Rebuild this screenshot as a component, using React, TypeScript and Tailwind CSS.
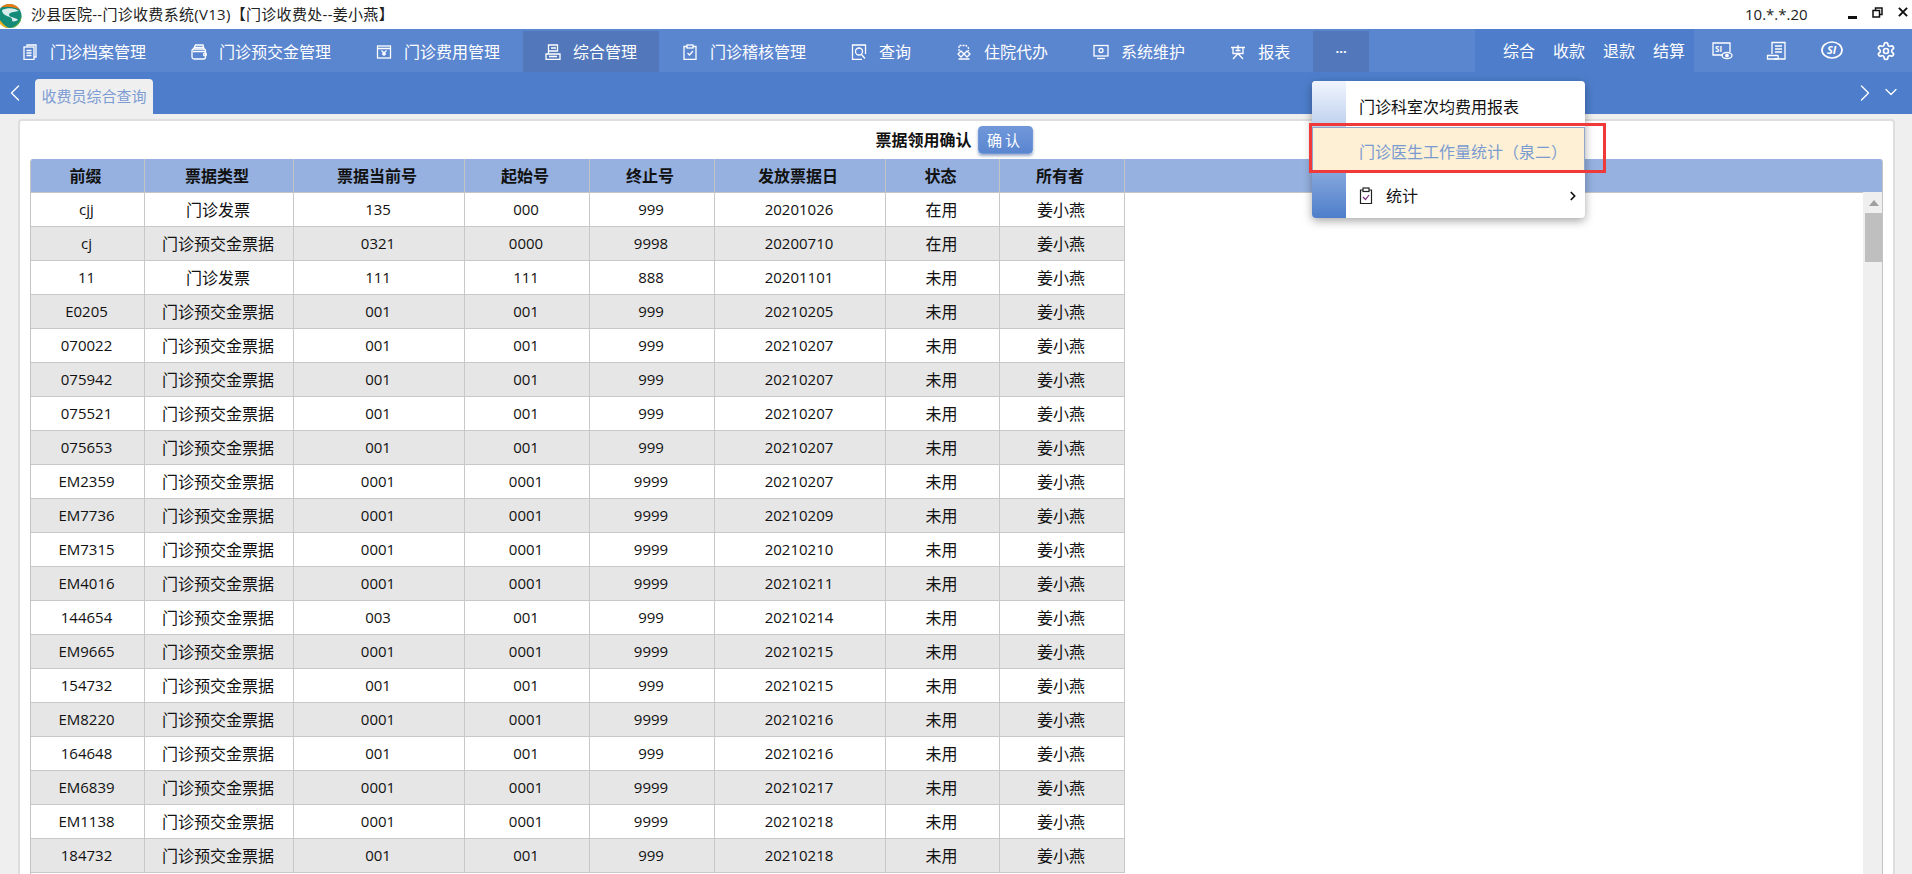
import React from 'react';
import { ChevronLeft, ChevronRight, ChevronDown } from 'lucide-react';

const COLS = 'grid grid-cols-[114px_149px_171px_125px_125px_171px_114px_125px]';
const HEADERS = ['前缀', '票据类型', '票据当前号', '起始号', '终止号', '发放票据日', '状态', '所有者'];

const MZ = '门诊发票';
const YJ = '门诊预交金票据';
const OWNER = '姜小燕';

const ROWS: string[][] = [
	['cjj', MZ, '135', '000', '999', '20201026', '在用'],
	['cj', YJ, '0321', '0000', '9998', '20200710', '在用'],
	['11', MZ, '111', '111', '888', '20201101', '未用'],
	['E0205', YJ, '001', '001', '999', '20210205', '未用'],
	['070022', YJ, '001', '001', '999', '20210207', '未用'],
	['075942', YJ, '001', '001', '999', '20210207', '未用'],
	['075521', YJ, '001', '001', '999', '20210207', '未用'],
	['075653', YJ, '001', '001', '999', '20210207', '未用'],
	['EM2359', YJ, '0001', '0001', '9999', '20210207', '未用'],
	['EM7736', YJ, '0001', '0001', '9999', '20210209', '未用'],
	['EM7315', YJ, '0001', '0001', '9999', '20210210', '未用'],
	['EM4016', YJ, '0001', '0001', '9999', '20210211', '未用'],
	['144654', YJ, '003', '001', '999', '20210214', '未用'],
	['EM9665', YJ, '0001', '0001', '9999', '20210215', '未用'],
	['154732', YJ, '001', '001', '999', '20210215', '未用'],
	['EM8220', YJ, '0001', '0001', '9999', '20210216', '未用'],
	['164648', YJ, '001', '001', '999', '20210216', '未用'],
	['EM6839', YJ, '0001', '0001', '9999', '20210217', '未用'],
	['EM1138', YJ, '0001', '0001', '9999', '20210218', '未用'],
	['184732', YJ, '001', '001', '999', '20210218', '未用'],
];

const Ico = ({ children, size = 16 }: { children: React.ReactNode; size?: number }) => (
	<svg width={size} height={size} viewBox="0 0 16 16" fill="none" stroke="currentColor" strokeWidth="1.3" className="shrink-0">
		{children}
	</svg>
);

const NAV: { label: string; icon: React.ReactNode; active?: boolean }[] = [
	{
		label: '门诊档案管理',
		icon: (
			<Ico>
				<path d="M5 2.5V1h9v12h-2" />
				<rect x="2" y="3" width="10" height="12.500" />
				<path d="M4.500 6.500h5M4.500 9h5M4.500 11.500h5" />
			</Ico>
		),
	},
	{
		label: '门诊预交金管理',
		icon: (
			<Ico>
				<rect x="1" y="5" width="13.500" height="10" rx="2" />
				<path d="M2.500 5l2-4h7.500l1 4" />
				<path d="M3.500 3.500h9M2 7.500h12" />
				<circle cx="14" cy="10.500" r="1.400" />
			</Ico>
		),
	},
	{
		label: '门诊费用管理',
		icon: (
			<Ico>
				<rect x="1.500" y="2" width="13" height="12" />
				<path d="M1.500 4.500h13M5.500 6.500l2.500 2.500 2.500-2.500M8 9v3M6 10h4" />
			</Ico>
		),
	},
	{
		label: '综合管理',
		active: true,
		icon: (
			<Ico>
				<path d="M3.500 1h9v6h-9zM3.500 7v3M1 10h14v5.500H1zM6 4h5M4 12.500h8" />
			</Ico>
		),
	},
	{
		label: '门诊稽核管理',
		icon: (
			<Ico>
				<path d="M5 2.500H2v13h12v-13h-3" />
				<rect x="5" y="1" width="6" height="3" />
				<path d="M5.500 9l2 2 3.500-4" />
			</Ico>
		),
	},
	{
		label: '查询',
		icon: (
			<Ico>
				<path d="M14.500 10V1H1.500v14.500H11" />
				<circle cx="8" cy="7.500" r="3.500" />
				<path d="M10.500 10.500l3.500 4" />
			</Ico>
		),
	},
	{
		label: '住院代办',
		icon: (
			<Ico>
				<path d="M3 7V1.500h7L12.500 4v3" strokeDasharray="2 1" />
				<path d="M2 10l3-3 3 3-3 3zM8 10l3-3 3 3-3 3zM2.500 15h11" />
			</Ico>
		),
	},
	{
		label: '系统维护',
		icon: (
			<Ico>
				<rect x="1" y="1.500" width="14" height="10.500" />
				<circle cx="8" cy="6.500" r="2" />
				<path d="M4 14.500h8" />
			</Ico>
		),
	},
	{
		label: '报表',
		icon: (
			<Ico>
				<path d="M1 3.500h14M3 3.500v6h10v-6M8 1v6.500M3 15l5-5.500 5 5.500M5.500 6.500h5" />
			</Ico>
		),
	},
];

const Logo = () => (
	<svg width="24" height="26" viewBox="0 0 24 26" className="shrink-0">
		<circle cx="9.500" cy="14" r="12" fill="#148a78" />
		<path d="M1 5.500A12 12 0 0 1 20 8c-5-3-13-4-19-2.500z" fill="#ee7a14" />
		<path d="M-2 15c0 5 3 9 7 10.500l4 .500C4 24 0 19-2 15z" fill="#f2b31e" />
		<path d="M21.500 13a12 12 0 0 1-12 13c6-1 11-6 12-13z" fill="#5cae3a" />
		<path d="M2 8c6-3 13-2 17 1-5 1-10 1-10 4 1 3 7 2 9 5-2 1-4 2-6 1 1-3-2-4-5-5-3-1-5-3-5-6z" fill="#d9ecec" />
	</svg>
);

const MenuCheckIcon = () => (
	<svg width="14" height="18" viewBox="0 0 14 18" fill="none" stroke="#222" strokeWidth="1.200">
		<path d="M4 3H1.500v13.500h11V3H10" />
		<rect x="4" y="1" width="6" height="3.500" fill="#fff" />
		<path d="M4 10l2.500 2.500 3.500-4.500" stroke="#7a2a7a" />
	</svg>
);

export default function App() {
	return (
		<div className="relative flex h-screen w-screen flex-col overflow-hidden bg-[#efefef] font-['Open_Sans','Noto_Sans_CJK_SC',sans-serif] text-[16px] text-[#111]">
			{/* title bar */}
			<div className="flex h-[29px] shrink-0 items-center bg-white">
				<Logo />
				<span className="ml-[7px] text-[15px] leading-none tracking-[0.3px] text-[#222]">沙县医院--门诊收费系统(V13)【门诊收费处--姜小燕】</span>
				<span className="ml-auto w-[60px] text-[15px] leading-none text-[#222]">10.*.*.20</span>
				<div className="ml-[43px] mr-[4px] flex items-center gap-[15px]">
					<span className="mt-[5px] h-[3px] w-[9px] bg-[#111]" />
					<svg width="11" height="11" viewBox="0 0 11 11" fill="none" stroke="#111" strokeWidth="1.500" className="mb-[5px]">
						<rect x="1" y="3.500" width="6.500" height="6.500" />
						<path d="M3.500 3V1h6.500v6.500H8" />
					</svg>
					<svg width="10" height="10" viewBox="0 0 11 11" fill="none" stroke="#111" strokeWidth="2.200" className="mb-[5px]">
						<path d="M1 1l9 9M10 1l-9 9" />
					</svg>
				</div>
			</div>

			{/* main nav */}
			<div className="flex h-[43px] shrink-0 justify-between bg-[#5a85cf] text-white">
				<div className="mt-[2px] flex gap-px">
					{NAV.map((n) => (
						<div key={n.label} className={`flex h-[41px] items-center gap-[12px] pl-[22px] pr-[22px] ${n.active ? 'bg-[#5278bb]' : ''}`}>
							{n.icon}
							<span>{n.label}</span>
						</div>
					))}
					<div className="flex h-[41px] w-[56px] items-center justify-center bg-[#5278bb] text-[13px] font-bold">···</div>
				</div>
				<div className="flex">
					<div className="flex w-[219px] items-center justify-end gap-[18px] bg-[#4e7ecb] pr-[9px]">
						<span>综合</span>
						<span>收款</span>
						<span>退款</span>
						<span>结算</span>
					</div>
					<div className="flex w-[218px] items-start gap-[33px] pl-[17px] pt-[12px]">
						<svg width="22" height="20" viewBox="0 0 22 20" fill="none" stroke="currentColor" strokeWidth="1.300" className="shrink-0">
							<path d="M12 14H2V2h17v9" />
							<text x="4" y="10.500" fill="currentColor" stroke="none" fontSize="8" fontWeight="700">SI</text>
							<ellipse cx="16" cy="14.500" rx="5" ry="3" />
							<circle cx="16" cy="14.500" r="1.200" fill="currentColor" />
						</svg>
						<svg width="22" height="20" viewBox="0 0 22 20" fill="none" stroke="currentColor" strokeWidth="1.300" className="shrink-0">
							<path d="M6 13V1.500h13V18H8" />
							<path d="M9 5h7M9 8h7M9 11h7" />
							<path d="M1.500 18v-3.500h10c1 0 1 3.500 0 3.500z" />
						</svg>
						<svg width="22" height="20" viewBox="0 0 22 20" fill="none" stroke="currentColor" strokeWidth="1.700" className="shrink-0">
							<ellipse cx="11" cy="9" rx="10" ry="8" />
							<text x="6" y="13" fill="currentColor" stroke="none" fontSize="11" fontWeight="700" fontStyle="italic">SI</text>
						</svg>
						<svg width="20" height="20" viewBox="0 0 24 24" fill="none" stroke="currentColor" strokeWidth="2" strokeLinecap="round" strokeLinejoin="round" className="shrink-0">
							<path d="M12.220 2h-.440a2 2 0 0 0-2 2v.180a2 2 0 0 1-1 1.730l-.430.250a2 2 0 0 1-2 0l-.150-.080a2 2 0 0 0-2.730.730l-.220.380a2 2 0 0 0 .730 2.730l.150.100a2 2 0 0 1 1 1.720v.510a2 2 0 0 1-1 1.740l-.150.090a2 2 0 0 0-.730 2.730l.220.380a2 2 0 0 0 2.730.730l.150-.080a2 2 0 0 1 2 0l.430.250a2 2 0 0 1 1 1.730V20a2 2 0 0 0 2 2h.440a2 2 0 0 0 2-2v-.180a2 2 0 0 1 1-1.730l.430-.250a2 2 0 0 1 2 0l.150.080a2 2 0 0 0 2.730-.730l.220-.390a2 2 0 0 0-.730-2.730l-.150-.080a2 2 0 0 1-1-1.740v-.500a2 2 0 0 1 1-1.740l.150-.090a2 2 0 0 0 .730-2.730l-.220-.380a2 2 0 0 0-2.730-.730l-.150.080a2 2 0 0 1-2 0l-.430-.250a2 2 0 0 1-1-1.730V4a2 2 0 0 0-2-2z" />
							<circle cx="12" cy="12" r="3" />
						</svg>
					</div>
				</div>
			</div>

			{/* tab strip */}
			<div className="flex h-[42px] shrink-0 bg-[#4e7ecb] text-white">
				<ChevronLeft size={28} strokeWidth={1.200} className="ml-px mt-[7px]" />
				<div className="ml-[6px] mt-[7px] flex h-[35px] w-[118px] items-center justify-center rounded-t-[4px] bg-[#efefef] text-[15px] text-[#7d9cd4]">收费员综合查询</div>
				<ChevronRight size={28} strokeWidth={1.200} className="ml-auto mt-[7px]" />
				<ChevronDown size={20} strokeWidth={1.500} className="ml-[2px] mr-[11px] mt-[10px]" />
			</div>

			{/* content card */}
			<div className="ml-[18px] mr-[17px] mt-[5px] min-h-0 flex-1 overflow-hidden rounded-t-[4px] border-x-2 border-t-2 border-[#dedede] bg-white">
				<div className="flex h-[38px] items-center justify-center gap-[6px] pr-[5px]">
					<span className="font-semibold">票据领用确认</span>
					<span className="flex h-[28px] w-[55px] items-center justify-center rounded-[4px] border border-[#6f97d6] bg-[linear-gradient(#7098da,#5a85cf)] text-[15px] tracking-[3px] text-white shadow-[0_2px_3px_rgba(60,90,150,0.5)]">确认</span>
				</div>
				<div className="mx-[10px] overflow-hidden rounded-t-[3px] border-x border-[#c4c4c4]">
					<div className="flex h-[33px] bg-[#96b1e0] font-semibold">
						<div className={COLS}>
							{HEADERS.map((h) => (
								<div key={h} className="flex items-center justify-center border-r border-[#c4c4c4] pr-[4px]">{h}</div>
							))}
						</div>
					</div>
					<div className="flex">
						<div className="flex-1 border-t border-[#c4c4c4]">
							{ROWS.map((r, i) => (
								<div key={r[0]} className={`${COLS} h-[34px] w-fit ${i % 2 ? 'bg-[#e6e6e6]' : 'bg-white'}`}>
									{[...r, OWNER].map((c, j) => (
										<div key={j} className={`flex items-center justify-center border-b border-r border-[#c8c8c8] pr-[2px] ${j === 1 || j > 5 ? '' : 'text-[15px]'}`}>{c}</div>
									))}
								</div>
							))}
						</div>
						<div className="relative h-[700px] w-[19px] bg-[#efefef]">
							<span className="absolute left-[6px] top-[8px] h-0 w-0 border-x-[5px] border-b-[6px] border-x-transparent border-b-[#a0a0a0]" />
							<div className="absolute left-[2px] right-0 top-[21px] h-[49px] bg-[#bfbfbf]" />
						</div>
					</div>
				</div>
			</div>

			{/* popup menu */}
			<div className="absolute left-[1312px] top-[81px] w-[273px] overflow-hidden rounded-[4px] bg-white shadow-[0_3px_10px_rgba(0,0,0,0.35)]">
				<div className="absolute inset-y-0 left-0 w-[34px] bg-[linear-gradient(#f0f5fe,#c3d4ef_30%,#4e7ecb)]" />
				<div className="relative flex h-[46px] items-center pl-[47px] pt-[6px]">门诊科室次均费用报表</div>
				<div className="relative flex h-[44px] items-center border border-[#8fa5c9] bg-[#fdf0d5] pl-[46px] pt-[6px] text-[#7b9bd0]">门诊医生工作量统计（泉二）</div>
				<div className="relative flex h-[47px] items-center pl-[47px] pt-[2px]">
					<MenuCheckIcon />
					<span className="ml-[13px]">统计</span>
					<ChevronRight size={14} strokeWidth={3} className="ml-auto mr-[5px]" />
				</div>
			</div>

			{/* red annotation box */}
			<div className="absolute left-[1309px] top-[123px] h-[50px] w-[297px] border-[3px] border-[#f03a3a]" />
		</div>
	);
}
